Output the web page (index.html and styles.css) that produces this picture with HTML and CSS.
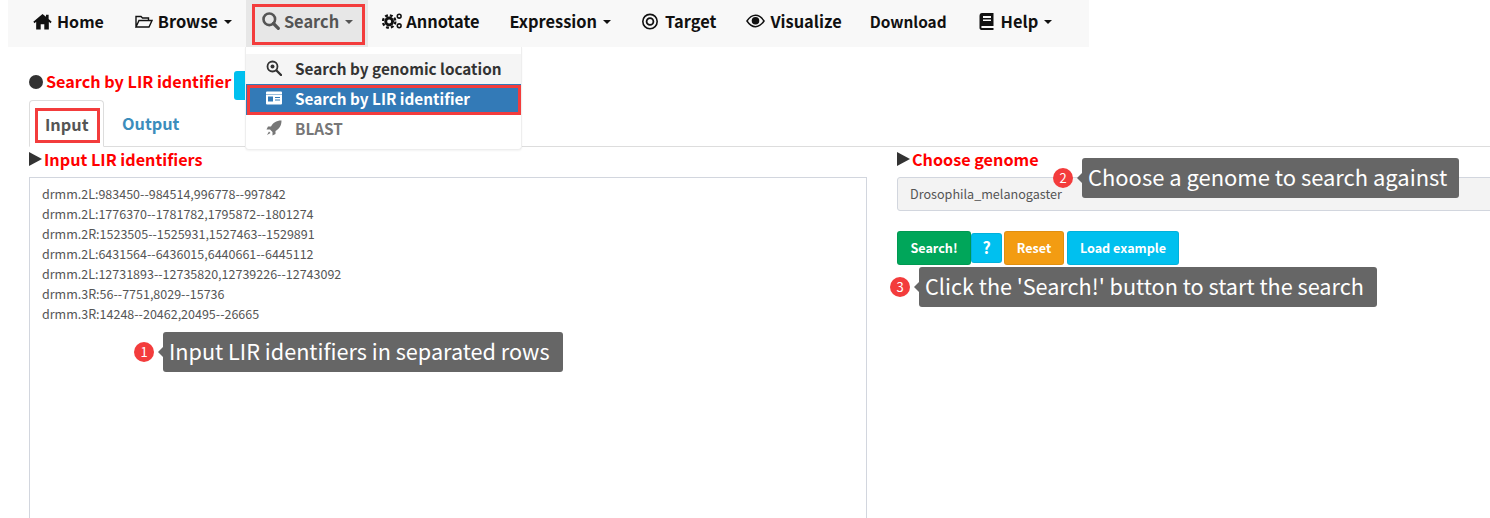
FILE: index.html
```html
<!DOCTYPE html>
<html lang="en">
<head>
<meta charset="utf-8">
<title>Search by LIR identifier</title>
<link rel="stylesheet" href="styles.css">
</head>
<body>
<nav class="navbar">
  <a class="nav-item nav-home"><svg class="ico ico-home" viewBox="0 0 18 16"><path d="M9 0.800 L0.300 8.200 L1.500 9.600 L3 8.300 V15.500 H7.300 V10.500 H10.700 V15.500 H15 V8.300 L16.500 9.600 L17.700 8.200 L14.800 5.700 V1.500 H12.300 V3.600 Z"/></svg>Home</a>
  <a class="nav-item nav-browse"><svg class="ico ico-18" viewBox="0 0 18 16"><path fill="none" stroke="currentColor" stroke-width="1.400" d="M1 13.500 V3 H6 L7.500 4.500 H13.500 V7 M1 13.500 L4 7 H17 L14 13.500 Z"/></svg>Browse<span class="caret"></span></a>
  <a class="nav-item nav-search"><svg class="ico ico-search" viewBox="0 0 18 18"><circle cx="7.300" cy="7.300" r="5.800" fill="none" stroke="currentColor" stroke-width="2.600"/><path d="M11.500 11.500 L16.300 16.300" stroke="currentColor" stroke-width="3.200" stroke-linecap="round"/></svg>Search<span class="caret"></span></a>
  <a class="nav-item nav-annotate"><svg class="ico ico-annot" viewBox="0 0 22 18"><circle cx="7.500" cy="9.500" r="3.600" fill="none" stroke="currentColor" stroke-width="3"/><circle cx="7.500" cy="9.500" r="6.500" fill="none" stroke="currentColor" stroke-width="2.400" stroke-dasharray="3 2.100"/><circle cx="18" cy="4" r="2" fill="none" stroke="currentColor" stroke-width="1.600"/><circle cx="18" cy="14" r="2" fill="none" stroke="currentColor" stroke-width="1.600"/></svg>Annotate</a>
  <a class="nav-item nav-expression">Expression<span class="caret"></span></a>
  <a class="nav-item nav-target"><svg class="ico ico-target" viewBox="0 0 18 18"><circle cx="9" cy="9" r="7.600" fill="none" stroke="currentColor" stroke-width="1.700"/><circle cx="9" cy="9" r="3.600" fill="none" stroke="currentColor" stroke-width="1.900"/></svg>Target</a>
  <a class="nav-item nav-visualize"><svg class="ico ico-eye" viewBox="0 0 20 14"><path fill="none" stroke="currentColor" stroke-width="1.500" d="M1 7 C4 2.500 7 1 10 1 C13 1 16 2.500 19 7 C16 11.500 13 13 10 13 C7 13 4 11.500 1 7 Z"/><circle cx="10" cy="6.800" r="4"/></svg>Visualize</a>
  <a class="nav-item nav-download">Download</a>
  <a class="nav-item nav-help"><svg class="ico ico-book" viewBox="0 0 15 17"><path fill-rule="evenodd" d="M3 0 H14.500 V13 H3 C2 13 2 15 3 15 H14.500 V17 H3 C0.500 17 0.500 15 0.500 14 V3 C0.500 1 1.500 0 3 0 Z M4 3 V5 H12 V3 Z M4 6.500 V8 H12 V6.500 Z"/></svg>Help<span class="caret"></span></a>
</nav>

<main class="content">
  <h1 class="page-title"><span class="dot"></span><span class="title-text">Search by LIR identifier</span><button class="help-btn" type="button">?</button></h1>
  <div class="tabs">
    <a class="tab tab-active">Input</a>
    <a class="tab">Output</a>
  </div>
  <div class="columns">
    <section class="col-left">
      <h2 class="section-title"><span class="tri"></span>Input LIR identifiers</h2>
      <div class="textarea">drmm.2L:983450--984514,996778--997842
drmm.2L:1776370--1781782,1795872--1801274
drmm.2R:1523505--1525931,1527463--1529891
drmm.2L:6431564--6436015,6440661--6445112
drmm.2L:12731893--12735820,12739226--12743092
drmm.3R:56--7751,8029--15736
drmm.3R:14248--20462,20495--26665</div>
    </section>
    <section class="col-right">
      <h2 class="section-title"><span class="tri"></span>Choose genome</h2>
      <div class="select">Drosophila_melanogaster</div>
      <div class="actions">
        <button class="btn btn-green" type="button">Search!</button>
        <button class="btn btn-q" type="button">?</button>
        <button class="btn btn-orange" type="button">Reset</button>
        <button class="btn btn-blue" type="button">Load example</button>
      </div>
    </section>
  </div>
</main>

<div class="dropdown">
  <a class="dd-item dd-hover"><svg class="dd-ico" viewBox="0 0 16 16"><circle cx="6.500" cy="6.500" r="5" fill="none" stroke="currentColor" stroke-width="1.800"/><circle cx="6.500" cy="6.500" r="2" /><path d="M10.500 10.500 L15 15" stroke="currentColor" stroke-width="2.400" stroke-linecap="round"/></svg>Search by genomic location</a>
  <a class="dd-item dd-active"><svg class="dd-ico" viewBox="0 0 16 13"><path fill-rule="evenodd" d="M1 0 H15 A1 1 0 0 1 16 1 V12 A1 1 0 0 1 15 13 H1 A1 1 0 0 1 0 12 V1 A1 1 0 0 1 1 0 Z M0 2.500 V3 H16 V2.500 Z M2 5 V10 H7 V5 Z M9 5.500 V6.500 H14 V5.500 Z M9 8 V9 H14 V8 Z"/></svg>Search by LIR identifier</a>
  <a class="dd-item dd-muted"><svg class="dd-ico" viewBox="0 0 16 16"><path d="M15.500 0.500 C10 0.500 7 3 5 6.500 H2 L0.500 9.500 H4 L6.500 12 V15.500 L9.500 14 V11 C13 9 15.500 6 15.500 0.500 Z"/><path d="M3 11.500 L1 15 L4.500 13 Z"/></svg>BLAST</a>
</div>

<span class="mark mark-nav"></span>
<span class="mark mark-tab"></span>
<span class="mark mark-dd"></span>

<div class="tip tip-1"><span class="badge">1</span><span class="tip-box">Input LIR identifiers in separated rows</span></div>
<div class="tip tip-2"><span class="badge">2</span><span class="tip-box">Choose a genome to search against</span></div>
<div class="tip tip-3"><span class="badge">3</span><span class="tip-box">Click the 'Search!' button to start the search</span></div>
</body>
</html>
```
FILE: styles.css
```css
* { box-sizing: border-box; }
html, body {
  margin: 0;
  width: 1490px;
  height: 518px;
  overflow: hidden;
  background: #fff;
}
body {
  position: relative;
  font-family: "Noto Sans CJK SC", "Noto Sans", sans-serif;
  color: #333;
  font-size: 16px;
}
.navbar {
  display: flex;
  margin-left: 8px;
  width: 1081px;
  height: 47px;
  background: #f8f8f8;
  padding-left: 10px;
}
.nav-item {
  display: flex;
  align-items: center;
  padding: 0 15px 5px;
  font-size: 16.4px;
  font-weight: 700;
  color: #111;
  white-space: nowrap;
}
.nav-home { padding-right: 16px; font-size: 16px; }
.nav-browse { padding-right: 14px; }
.nav-search { background: #e7e7e7; color: #555; padding-left: 16px; }
.nav-annotate { padding-left: 14px; }
.nav-visualize { padding-right: 13px; }
.nav-download { font-size: 15.4px; }
.nav-help { margin-left: 2px; }
.ico { flex: none; fill: currentColor; }
.ico-home { width: 19px; height: 17px; margin-right: 5px; }
.ico-18 { width: 18px; height: 17px; margin-right: 5px; }
.ico-target { width: 18px; height: 17px; margin-right: 6px; }
.ico-search { width: 18px; height: 18px; margin-right: 4px; }
.ico-annot { width: 21px; height: 18px; margin-right: 3px; }
.ico-eye { width: 19px; height: 14px; margin-right: 5px; }
.ico-book { width: 15px; height: 17px; margin-right: 7px; }
.caret {
  width: 0;
  height: 0;
  margin-left: 6px;
  margin-top: 2px;
  border-top: 4px solid currentColor;
  border-left: 4px solid transparent;
  border-right: 4px solid transparent;
}
.content { padding: 24px 0 0 29px; width: 1700px; }
.page-title {
  display: flex;
  align-items: flex-start;
  margin: 0;
  height: 29px;
  font-size: 16.2px;
  line-height: 20px;
  font-weight: 700;
  color: #f00;
}
.dot {
  width: 14px;
  height: 14px;
  margin: 4px 3px 0 0;
  border-radius: 50%;
  background: #333;
}
.help-btn {
  width: 30px;
  height: 29px;
  margin-left: 3px;
  border: 0;
  border-radius: 3px;
  background: #00c0ef;
  color: #fff;
}
.tabs {
  display: flex;
  height: 47px;
  border-bottom: 1px solid #ddd;
}
.tab {
  display: flex;
  align-items: center;
  padding: 0 14px;
  margin-right: 3px;
  font-size: 16.3px;
  font-weight: 700;
  color: #3c8dbc;
  border: 1px solid transparent;
}
.tab-active {
  width: 75px;
  padding-left: 15px;
  color: #555;
  background: #fff;
  border-color: #ddd #ddd #fff;
  border-radius: 4px 4px 0 0;
  height: 47px;
}
.columns { display: flex; gap: 30px; }
.col-left { width: 838px; flex: none; }
.col-right { width: 700px; flex: none; }
.section-title {
  display: flex;
  align-items: center;
  margin: 0;
  height: 30px;
  padding-bottom: 6px;
  font-size: 16.2px;
  font-weight: 700;
  color: #f00;
}
.tri {
  width: 0;
  height: 0;
  margin-right: 2px;
  border-left: 13px solid #333;
  border-top: 7.5px solid transparent;
  border-bottom: 7.5px solid transparent;
}
.textarea {
  height: 400px;
  padding: 6px 12px;
  border: 1px solid #d2d6de;
  font-size: 12.5px;
  line-height: 20px;
  color: #555;
  white-space: pre;
}
.select {
  height: 34px;
  padding: 0 12px;
  line-height: 32px;
  border: 1px solid #d2d6de;
  border-radius: 3px;
  background: #f3f3f3;
  font-size: 12.6px;
  color: #555;
}
.actions { display: flex; align-items: center; margin-top: 20px; }
.btn {
  height: 34px;
  padding: 0 0 2px;
  border: 1px solid rgba(0,0,0,.08);
  border-radius: 3px;
  color: #fff;
  font: 700 12.6px "Noto Sans CJK SC", "Noto Sans", sans-serif;
}
.btn-green { width: 74px; background: #00a65a; }
.btn-q { width: 31px; height: 30px; background: #00c0ef; font-size: 16px; margin-right: 2px; }
.btn-orange { width: 60px; background: #f39c12; margin-right: 3px; }
.btn-blue { width: 112px; background: #00c0ef; }
.dropdown {
  position: absolute;
  left: 245px;
  top: 47px;
  width: 277px;
  height: 103px;
  padding-top: 7px;
  background: #fff;
  border: 1px solid #eee;
  border-top: 0;
  border-radius: 0 0 4px 4px;
  box-shadow: 0 1px 2px rgba(0,0,0,.05);
}
.dd-item {
  display: flex;
  align-items: center;
  height: 30px;
  padding: 0 0 2px 20px;
  font-size: 15.3px;
  font-weight: 700;
  color: #333;
}
.dd-ico { width: 16px; height: 16px; margin-right: 13px; fill: currentColor; flex: none; }
.dd-hover { background: #f5f5f5; }
.dd-active { background: #337ab7; color: #fff; height: 31px; padding-bottom: 3px; }
.dd-muted { color: #777; padding-bottom: 4px; }
.mark {
  position: absolute;
  border: 3px solid #f33c3c;
}
.mark-nav { left: 252px; top: 4px; width: 113px; height: 41px; }
.mark-tab { left: 35px; top: 108px; width: 65px; height: 35px; }
.mark-dd { left: 247px; top: 85px; width: 274px; height: 30px; }
.tip {
  position: absolute;
  display: flex;
  align-items: center;
}
.tip-1 { left: 134px; top: 332px; }
.tip-2 { left: 1053px; top: 158px; }
.tip-3 { left: 890px; top: 267px; }
.badge {
  width: 20px;
  height: 20px;
  border-radius: 50%;
  background: #f33c3c;
  color: #fff;
  font-size: 13px;
  line-height: 20px;
  text-align: center;
  margin-right: 9px;
}
.tip-box {
  position: relative;
  height: 40px;
  padding: 0 13px 0 6px;
  background: #666;
  border-radius: 3px;
  color: #fff;
  font-size: 21.65px;
  line-height: 37px;
  white-space: nowrap;
}
.tip-2 .tip-box { font-size: 21.95px; padding-right: 12px; }
.tip-box::before {
  content: "";
  position: absolute;
  left: -5px;
  top: 15px;
  border-right: 5px solid #666;
  border-top: 5px solid transparent;
  border-bottom: 5px solid transparent;
}
```
